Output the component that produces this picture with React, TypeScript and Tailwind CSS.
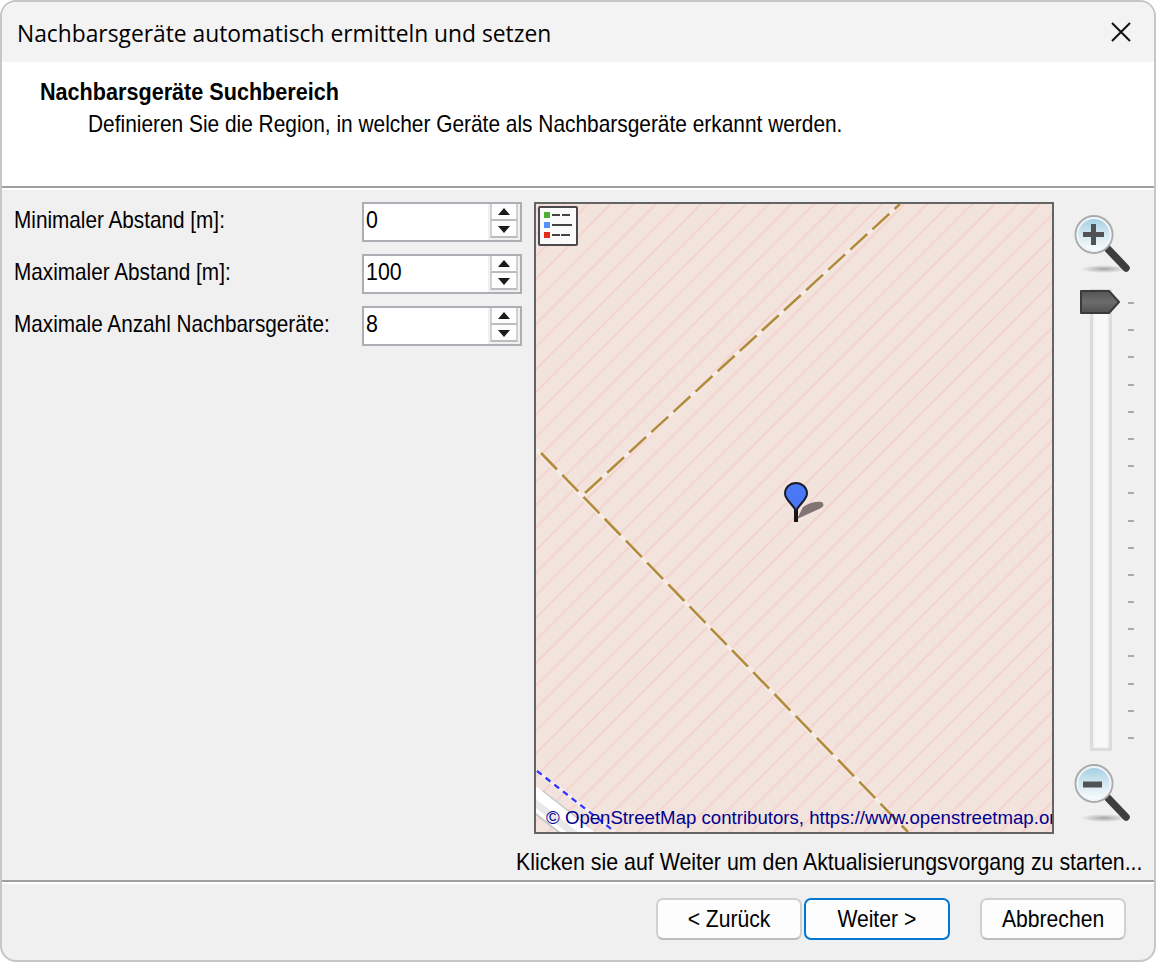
import { useState } from "react";

const ui = "inline-block origin-left whitespace-nowrap";

function Spinner({ value }: { value: string }) {
  return (
    <div className="flex h-10 w-40 border-2 border-[#adadb3] bg-white">
      <div className="flex-1 pl-[2px] text-[24px] leading-[32px]">
        <span className={ui + " scale-x-[0.89]"}>{value}</span>
      </div>
      <div className="flex w-8 flex-col bg-[#f0f0f0] pl-[2px] pr-[2px]">
        <div className="flex h-[17px] items-center justify-center border-x-2 border-b-2 border-[#d0d0d0] bg-[#fdfdfd] border-b-[#bcbcbc]">
          <svg width="12" height="8" viewBox="0 0 12 8"><path d="M6 0L12 7H0Z" fill="#1a1a1a" /></svg>
        </div>
        <div className="flex h-[17px] items-center justify-center border-x-2 border-b-2 border-[#d0d0d0] bg-[#fdfdfd] border-b-[#bcbcbc]">
          <svg width="12" height="8" viewBox="0 0 12 8"><path d="M6 8L12 1H0Z" fill="#1a1a1a" /></svg>
        </div>
      </div>
    </div>
  );
}

function Magnifier({ plus }: { plus?: boolean }) {
  const id = plus ? "lens-in" : "lens-out";
  return (
    <svg width="60" height="60" viewBox="0 0 60 60" className="block">
      <defs>
        <linearGradient id={id} x1="0" y1="0" x2="0" y2="1">
          <stop offset="0" stopColor="#9ccbe0" />
          <stop offset="0.5" stopColor="#d3e8f1" />
          <stop offset="1" stopColor="#ffffff" />
        </linearGradient>
        <radialGradient id={id + "-shadow"}>
          <stop offset="0" stopColor="#888" stopOpacity="0.75" />
          <stop offset="1" stopColor="#999" stopOpacity="0" />
        </radialGradient>
      </defs>
      <ellipse cx="32" cy="55" rx="24" ry="4" fill={`url(#${id}-shadow)`} />
      <path d="M35 34L54 54" stroke="#3e3e3e" strokeWidth="7.5" strokeLinecap="round" />
      <circle cx="22" cy="20.500" r="18.500" fill={`url(#${id})`} stroke="#aaa" strokeWidth="2" />
      <circle cx="22" cy="20.500" r="16.500" fill="none" stroke="#eef4f7" strokeWidth="2" />
      <path d={plus ? "M11 20.500H32M21.500 10V31" : "M11 21.500H30"} stroke="#505254" strokeWidth={plus ? 5 : 6} />
    </svg>
  );
}

function Legend() {
  return (
    <svg width="40" height="40" viewBox="0 0 40 40" className="block">
      <rect x="1" y="1" width="38" height="38" rx="1" fill="#fafafa" stroke="#4a4a4c" strokeWidth="2" />
      <rect x="6" y="6" width="6" height="6" fill="#4fae35" />
      <rect x="6" y="16" width="6" height="6" fill="#5590ff" />
      <rect x="6" y="26" width="6" height="6" fill="#e62b17" />
      <path d="M14 9H22M24 9H32M14 19H34M14 29H22M23 29H32" stroke="#444" strokeWidth="1.800" />
    </svg>
  );
}

function MapView() {
  return (
    <div className="relative h-[632px] w-[520px] shrink-0 overflow-hidden border-2 border-[#646464] bg-[#f2e3dc]">
      <svg width="516" height="628" viewBox="536 204 516 628" className="block">
        <defs>
          <pattern id="hatch" width="22.600" height="22.600" patternUnits="userSpaceOnUse" x="536" y="211">
            <path d="M-2 24.600L24.600 -2M-2 2L2 -2M20.600 24.600L24.600 20.600" stroke="#f5d3cf" strokeWidth="2" />
          </pattern>
        </defs>
        <rect x="536" y="204" width="516" height="628" fill="url(#hatch)" />
        <path d="M536 800L582 836" stroke="#c6c6c6" strokeWidth="24" />
        <path d="M530 795L590 842" stroke="#fff" strokeWidth="21" />
        <path d="M530 799L585 842" stroke="#e8e8e8" strokeWidth="7" />
        <path d="M537 771L615 832" stroke="#f5eeee" strokeWidth="4" />
        <path d="M537 771L615 832" stroke="#3333ff" strokeWidth="2.300" strokeDasharray="6 5" />
        <path d="M536 449L908 832M582 496L900 204" stroke="#f7ece8" strokeWidth="4" />
        <path d="M541 453L908 832" stroke="#b28b3c" strokeWidth="2.600" strokeDasharray="23 7.500" />
        <path d="M585 493L900 204" stroke="#b28b3c" strokeWidth="2.600" strokeDasharray="23 7" />
        <path d="M797 519L803 507Q812 501 822 502Q826 506 819 509L797 519Z" fill="#6d6262" opacity="0.85" />
        <path d="M796 522V508" stroke="#151515" strokeWidth="4" />
        <path d="M796 511C793 504 785 500 785 493.500A11 10.500 0 0 1 807 493.500C807 500 799 504 796 511Z" fill="#4a78f5" stroke="#181c28" strokeWidth="2" />
      </svg>
      <div className="absolute left-[2px] top-[2px]"><Legend /></div>
      <div className="absolute left-[10px] top-[602px] text-[19px] leading-6 text-[#000090]">
        <span className={ui + " scale-x-[0.98]"}>© OpenStreetMap contributors, https://www.openstreetmap.org</span>
      </div>
    </div>
  );
}

function ZoomSlider() {
  return (
    <svg width="60" height="475" viewBox="1072 286 60 475" className="block overflow-visible">
      <rect x="1091.500" y="290.500" width="19" height="459" fill="#f1f1f1" stroke="#dcdcdc" strokeWidth="3" />
      <rect x="1095" y="300" width="12" height="447" fill="#f8f8f8" />
      {Array.from({ length: 17 }, (_, i) => (
        <rect key={i} x="1128" y={Math.round(302 + i * 27.190)} width="6" height="2" fill="#aaa" />
      ))}
      <defs>
        <linearGradient id="thumb" x1="0" y1="0" x2="0" y2="1">
          <stop offset="0" stopColor="#555" /><stop offset="0.5" stopColor="#6c6c6c" /><stop offset="1" stopColor="#505050" />
        </linearGradient>
      </defs>
      <path d="M1081 291H1109L1119 302L1109 313H1081Z" fill="url(#thumb)" stroke="#3a3a3a" strokeWidth="2" strokeLinejoin="round" />
    </svg>
  );
}

const rows = [
  { label: "Minimaler Abstand [m]:", value: "0" },
  { label: "Maximaler Abstand [m]:", value: "100" },
  { label: "Maximale Anzahl Nachbarsgeräte:", value: "8" },
];

export default function App() {
  const [open] = useState(true);
  if (!open) return null;
  return (
    <div className="h-[962px] w-[1156px] bg-white font-['Liberation_Sans',sans-serif] text-black">
      <div className="flex h-full flex-col overflow-hidden rounded-[16px] border-2 border-[#c6c6c6] bg-[#f0f0f0]">
        <header className="flex h-[60px] shrink-0 items-center justify-between bg-[#f3f3f3] pl-[15px] pr-[23px]">
          <h1 className="pt-[2px] font-['Open_Sans',sans-serif] text-[24px] leading-8">
            <span className={ui + " scale-x-[0.95]"}>Nachbarsgeräte automatisch ermitteln und setzen</span>
          </h1>
          <button aria-label="Schließen">
            <svg width="20" height="20" viewBox="0 0 20 20" className="block"><path d="M1 1L19 19M19 1L1 19" stroke="#111" strokeWidth="2" /></svg>
          </button>
        </header>
        <section className="h-[124px] shrink-0 bg-white pt-[14px] text-[24px] leading-8">
          <h2 className="pl-[38px] font-bold"><span className={ui + " scale-x-[0.9]"}>Nachbarsgeräte Suchbereich</span></h2>
          <p className="pl-[86px]"><span className={ui + " scale-x-[0.87]"}>Definieren Sie die Region, in welcher Geräte als Nachbarsgeräte erkannt werden.</span></p>
        </section>
        <div className="h-1 shrink-0 border-t-2 border-[#a0a0a0] bg-white" />
        <main className="flex h-[644px] shrink-0 pl-3 pt-3">
          <div className="flex w-[520px] shrink-0 flex-col gap-3">
            {rows.map((r) => (
              <div key={r.label} className="flex h-10">
                <label className="w-[348px] text-[24px] leading-9"><span className={ui + " scale-x-[0.864]"}>{r.label}</span></label>
                <Spinner value={r.value} />
              </div>
            ))}
          </div>
          <MapView />
          <div className="flex flex-col pl-[18px] pt-[12px]">
            <Magnifier plus />
            <div className="-mb-[1px] mt-[12px]"><ZoomSlider /></div>
            <div className="mt-[3px]"><Magnifier /></div>
          </div>
        </main>
        <div className="flex h-[46px] shrink-0 items-start pl-[514px] pt-[10px] text-[24px] leading-9">
          <span className={ui + " scale-x-[0.89]"}>Klicken sie auf Weiter um den Aktualisierungsvorgang zu starten...</span>
        </div>
        <div className="h-1 shrink-0 border-t-2 border-[#a0a0a0] bg-white" />
        <footer className="flex justify-end pr-7 pt-[14px] text-[24px]">
          <button className="h-[42px] w-[146px] rounded-[7px] border-2 border-[#d0d0d0] border-b-[#bcbcbc] bg-[#fdfdfd]"><span className="inline-block scale-x-[0.88] whitespace-nowrap">&lt; Zurück</span></button>
          <button className="ml-[2px] h-[42px] w-[146px] rounded-[7px] border-2 border-[#0078d4] bg-[#fdfdfd]"><span className="inline-block scale-x-[0.88] whitespace-nowrap">Weiter &gt;</span></button>
          <button className="ml-[30px] h-[42px] w-[146px] rounded-[7px] border-2 border-[#d0d0d0] border-b-[#bcbcbc] bg-[#fdfdfd]"><span className="inline-block scale-x-[0.88] whitespace-nowrap">Abbrechen</span></button>
        </footer>
      </div>
    </div>
  );
}
